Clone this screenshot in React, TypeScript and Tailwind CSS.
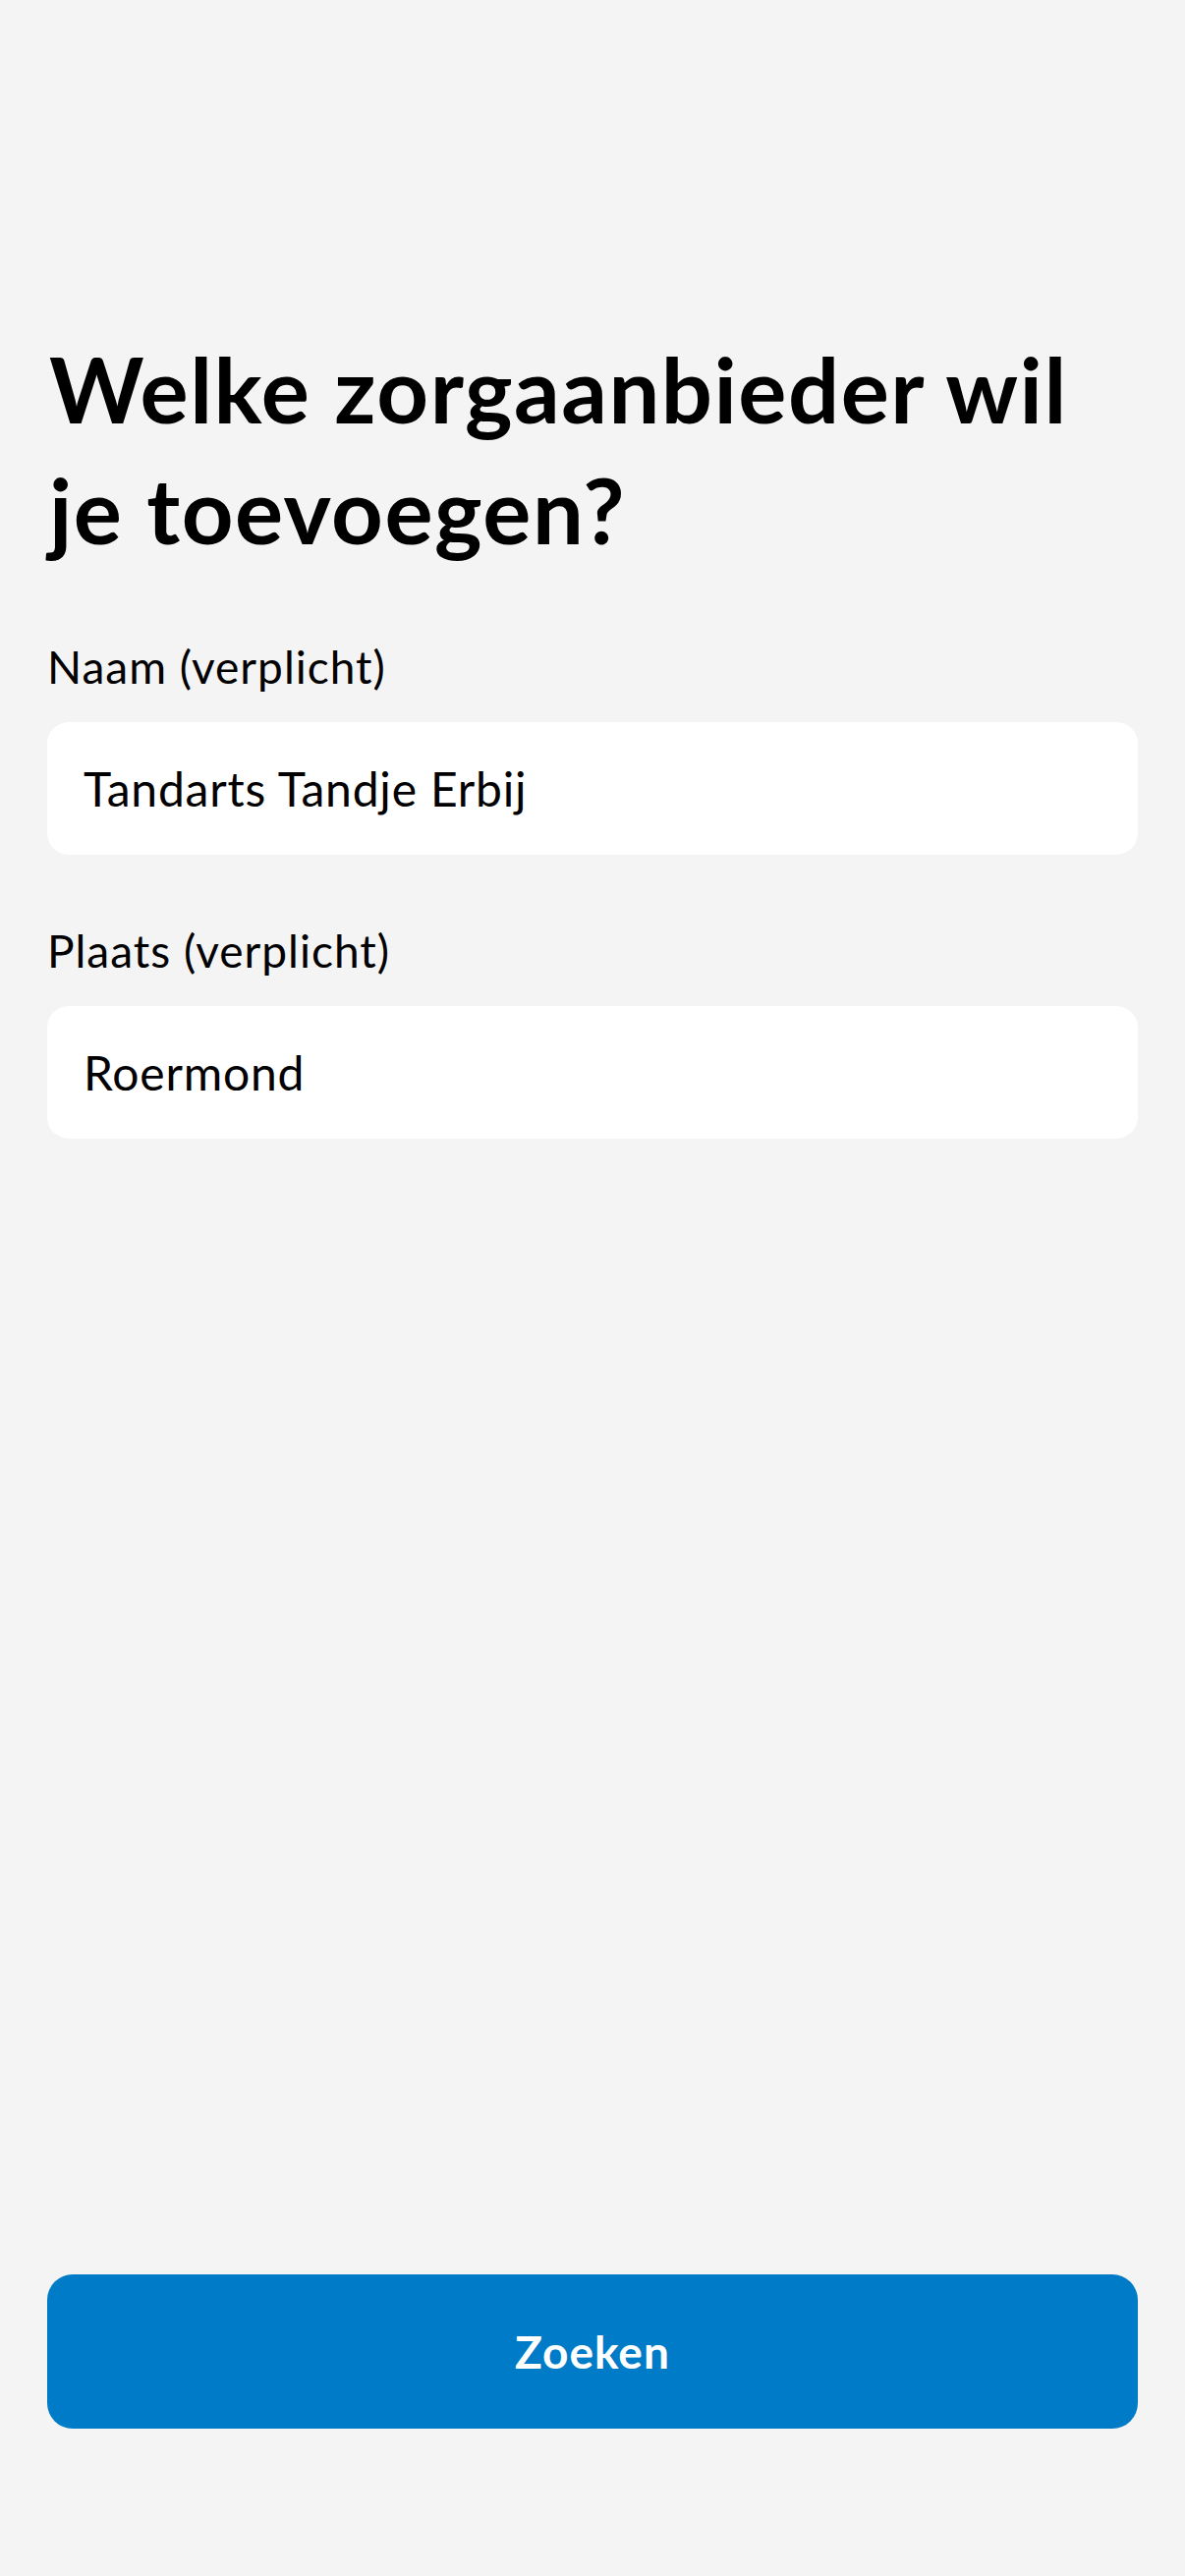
import React from "react";

const font = { fontFamily: "Lato, 'Noto Sans', sans-serif" };

const Field = ({ label, value, top }: { label: string; value: string; top: string }) => (
  <div className={`flex flex-col ${top}`}>
    <label className="text-[46px] leading-[52px] tracking-[1px] text-black">{label}</label>
    <div className="mt-[30px] h-[135px] flex items-center rounded-[22px] bg-white px-[37px]">
      <span className="text-[48px] leading-[56px] tracking-[0.8px] text-black">{value}</span>
    </div>
  </div>
);

export default function App() {
  return (
    <div
      className="min-h-[2622px] w-[1206px] bg-[#f4f4f4] flex flex-col px-[48px] pt-[334px] pb-[150px]"
      style={font}
    >
      <h1 className="text-[92px] leading-[123px] font-bold tracking-[1.5px] text-black pl-[2px]">
        Welke zorgaanbieder wil
        <br />
        je toevoegen?
      </h1>

      <Field label="Naam (verplicht)" value="Tandarts Tandje Erbij" top="mt-[73px]" />
      <Field label="Plaats (verplicht)" value="Roermond" top="mt-[72px]" />

      <div className="flex-1" />

      <button className="h-[157px] w-full rounded-[26px] bg-[#007bc7] text-white text-[46px] tracking-[1px] font-bold">
        Zoeken
      </button>
    </div>
  );
}
